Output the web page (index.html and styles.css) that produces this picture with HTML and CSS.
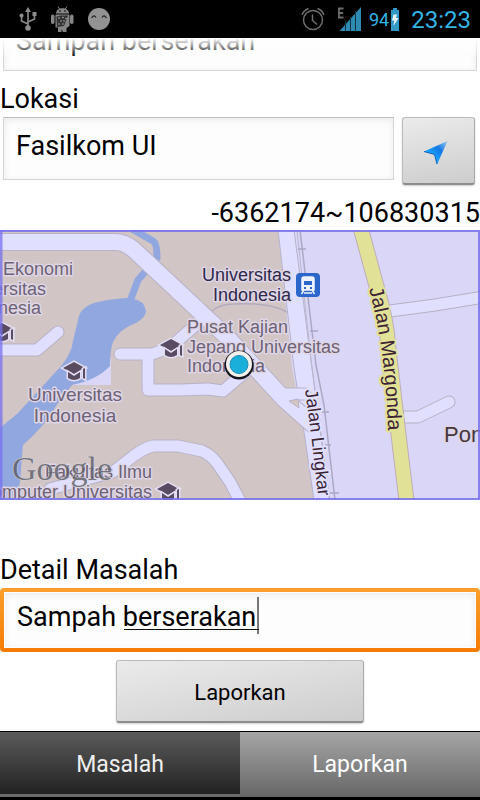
FILE: index.html
```html
<!DOCTYPE html>
<html lang="id">
<head>
<meta charset="utf-8">
<meta name="viewport" content="width=device-width, initial-scale=1">
<title>Laporkan Masalah</title>
<link rel="stylesheet" href="styles.css">
</head>
<body>
<header class="status">
  <div class="status-group notices">
    <svg class="usb" width="18" height="24" viewBox="0 0 18 24" aria-hidden="true">
      <path d="M9 4V20M9 17L2.500 14V9M9 15L15.500 12V7" fill="none" stroke="#8c8c8c" stroke-width="1.600"/>
      <path d="M9 0l3 5H6z" fill="#8c8c8c"/><circle cx="9" cy="21" r="2.800" fill="#8c8c8c"/>
      <circle cx="2.500" cy="8.500" r="2" fill="#8c8c8c"/><path d="M13.500 5h4v4h-4z" fill="#8c8c8c"/>
    </svg>
    <svg class="droid" width="23" height="27" viewBox="0 0 23 27" aria-hidden="true">
      <g fill="#858585"><path d="M5 7.500C5.200 0.500 17.800 0.500 18 7.500z"/><rect x="0" y="8.500" width="3.500" height="9.500" rx="1.700"/><rect x="19" y="8.500" width="3.500" height="9.500" rx="1.700"/><path d="M4.500 8.500h14V20l-3 2v4H12l-1.500-3v3H7v-4.500H4.500z"/></g>
      <path d="M7 .5l2 3M16 .5l-2 3" stroke="#858585"/>
      <path d="M5.500 10.500L10 9.500H17L13 20L6 21z" fill="#333"/>
      <g fill="#aaa"><circle cx="8" cy="12" r=".8"/><circle cx="12" cy="11.500" r=".8"/><circle cx="10" cy="15" r=".8"/><circle cx="13" cy="15" r=".8"/><circle cx="8" cy="18" r=".8"/><circle cx="12" cy="18" r=".8"/><circle cx="15" cy="12.500" r=".8"/></g>
      <g fill="#000"><circle cx="9" cy="5" r=".8"/><circle cx="14" cy="5" r=".8"/></g>
    </svg>
    <svg width="22" height="22" viewBox="0 0 22 22" aria-hidden="true">
      <circle cx="11" cy="11" r="11" fill="#929292"/>
      <path d="M3.500 10q2.500-4 4.500-.5M14 9.500q2-3.500 4.500.5" fill="none" stroke="#222" stroke-width="1.200"/>
    </svg>
  </div>
  <div class="status-group">
    <svg width="24" height="24" viewBox="0 0 24 24" aria-hidden="true">
      <g fill="none" stroke="#6e6e6e" stroke-width="1.500"><circle cx="12" cy="13" r="9.500"/><path d="M11.500 7.500V13.500L16 17.500M1 8Q3 3 7.500 1.500M16.500 1.500Q21 3 23 8"/></g>
    </svg>
    <svg class="signal" width="24" height="24" viewBox="0 0 24 24" aria-hidden="true">
      <path d="M1 1.500H6.500M2 1V11M1 10.500H6.500M1 6H6" fill="none" stroke="#6e6e6e" stroke-width="1.800"/>
      <path d="M2.500 24L24 0V24z" fill="#2d8bb2"/>
      <path d="M8.500 14V24M13.500 10V24M18.500 4V24" stroke="#0c3444"/>
    </svg>
    <span class="percent">94</span>
    <svg class="battery" width="8" height="23" viewBox="0 0 8 23" aria-hidden="true">
      <path d="M2 0h4v2h2v21H0V2h2z" fill="#3199c4"/><path d="M2.500 6.500H6L5 10h2.500L2.500 18l.7-5.500H1z" fill="#e8f5fa"/>
    </svg>
    <time class="clock">23:23</time>
  </div>
</header>

<main class="screen">
  <form class="report">
    <input class="field title" type="text" value="Sampah berserakan" aria-label="Masalah">
    <label class="caption" for="lokasi">Lokasi</label>
    <div class="location">
      <input class="field" id="lokasi" type="text" value="Fasilkom UI">
      <button class="button locate" type="button" aria-label="Lokasi saya">
        <svg width="24" height="24" viewBox="0 0 24 24" aria-hidden="true">
          <defs><linearGradient id="arrow" x1="1" y1="0" x2="0" y2="1"><stop offset="0" stop-color="#9ccdf2"/><stop offset=".35" stop-color="#1478e6"/><stop offset=".65" stop-color="#18a5ff"/><stop offset="1" stop-color="#0863cf"/></linearGradient></defs>
          <path d="M23.500 0L13 23.500L10.500 13.500L0 10.500z" fill="url(#arrow)"/><path d="M0 10.500L10.500 13.500L13 23" fill="none" stroke="#1560bd"/>
        </svg>
      </button>
    </div>
    <output class="coords" for="lokasi">-6362174~106830315</output>

    <svg class="map" viewBox="0 230 480 270" preserveAspectRatio="xMidYMid slice" role="img" aria-label="Peta">
      <defs>
        <path id="margonda" d="M369 289Q386 350 388 432L389 460"/>
        <path id="lingkar" d="M305 390Q311 430 315 470L321 520"/>
        <g id="cap"><path d="M0 7L11 1L22 7L11 13z"/><path d="M5 11V17Q11 21 17 17V11L11 15z"/><path d="M20 8V17L22 18V7z"/></g>
      </defs>
      <rect y="230" width="480" height="270" fill="#d1c5c5"/>
      <path d="M278 230H480V500H314L303 425L292 368z" fill="#dad6f7"/>
      <path d="M111 358V385H72z" fill="#dad6f7"/>
      <path d="M133 299Q144 300 146 311Q146 317 136 323Q119 329 113 342Q110 350 110 366Q97 380 72 385L58 403Q46 425 23 445L20 482L15 500H0V428L18 413L62 365Q72 352 73 341L79 316Q83 304 103 301Q113 299 127 298z" fill="#91a7e0"/>
      <path d="M132 229L153 241Q157 243 157 258L138 280L130 301" fill="none" stroke="#91a7e0" stroke-width="7"/>
      <path d="M212 311Q220 304 234 304Q270 302 287 312" fill="none" stroke="#b2abc0" stroke-width="1.500"/>
      <path d="M278 230H294L312 368L330 500H314L303 425L294 368z" fill="#e0dfff" stroke="#b6b2ca"/>
      <g fill="none" stroke="#b8b2c6" stroke-linecap="round" stroke-linejoin="round">
        <path d="M-10 242H115Q124 242 133 249L227 337L284 399L312 424" stroke-width="18"/>
        <path d="M-10 350H37L58 332M120 354H152Q165 350 175 343L198 323M148 355V390H180L208 389L223 391L250 368M284 394H305" stroke-width="13"/>
        <path d="M50 489L113 472L127 461Q143 448 153 446H178L202 451Q211 455 217 463L230 482L242 505" stroke-width="13"/>
      </g>
      <g fill="none" stroke="#e0dfff" stroke-linecap="round" stroke-linejoin="round">
        <path d="M-10 242H115Q124 242 133 249L227 337L284 399L312 424" stroke-width="16"/>
        <path d="M-10 350H37L58 332M120 354H152Q165 350 175 343L198 323M148 355V390H180L208 389L223 391L250 368M284 394H305" stroke-width="11"/>
        <path d="M50 489L113 472L127 461Q143 448 153 446H178L202 451Q211 455 217 463L230 482L242 505" stroke-width="11"/>
      </g>
      <path d="M289 401L298 399L299 408z" fill="#d1c5c5" stroke="#b8b2c6"/>
      <path d="M297 230L311 360L329 500" fill="none" stroke="#b9b6cc"/>
      <path d="M300 230L316 365L324 405L335 500M298 249H306M310 331H318M322 412H329M325 445H331M330 493H339" fill="none" stroke="#aba8c4" stroke-width="1.500"/>
      <g fill="none" stroke-linecap="round" stroke-linejoin="round">
        <path d="M390 311L435 305L490 296" stroke="#b5b1c2" stroke-width="13"/><path d="M400 417H418L449 402" stroke="#b5b1c2" stroke-width="13"/>
        <path d="M390 311L435 305L490 296M400 417H418L449 402" stroke="#e0dfff" stroke-width="11"/>
        <path d="M359 222L377 288Q387 323 388 345L397 422L407 505" stroke="#bdaeba" stroke-width="16"/>
        <path d="M359 222L377 288Q387 323 388 345L397 422L407 505" stroke="#e2e198" stroke-width="14"/>
      </g>
      <g class="road-name">
        <text class="yellow"><textPath href="#margonda">Jalan Margonda</textPath></text>
        <text class="lingkar"><textPath href="#lingkar">Jalan Lingkar</textPath></text>
      </g>
      <g class="place">
        <text x="3" y="275">Ekonomi</text><text x="46" y="295" text-anchor="end">ersitas</text><text x="41" y="314" text-anchor="end">nesia</text>
        <text x="187" y="333">Pusat Kajian</text><text x="187" y="353">Jepang Universitas</text><text x="187" y="372">Indonesia</text>
        <text x="152" y="478" text-anchor="end">Fakultas Ilmu</text><text x="152" y="498" text-anchor="end">omputer Universitas</text>
        <text class="large" x="75" y="401" text-anchor="middle">Universitas</text><text class="large" x="75" y="422" text-anchor="middle">Indonesia</text>
        <g class="station"><text x="291" y="281" text-anchor="end">Universitas</text><text x="291" y="301" text-anchor="end">Indonesia</text></g>
        <text class="pondok" x="444" y="442">Pon</text>
      </g>
      <g fill="#584b62" stroke="#e3def3" stroke-width="3" paint-order="stroke">
        <use href="#cap" x="-9" y="322"/><use href="#cap" x="63" y="361"/><use href="#cap" x="160" y="338"/><use href="#cap" x="157" y="482"/>
      </g>
      <rect x="296" y="273" width="24" height="24" rx="4" fill="#2b66cb"/>
      <path d="M304 277h8q2 0 2 2v11h-12v-11q0-2 2-2zM304 290l-2.500 4M312 290l2.500 4M304 293h8" fill="#eef2ff" stroke="#eef2ff" stroke-width="1.500"/>
      <path d="M304 281h8v4h-8zM304 287h2v2h-2zM310 287h2v2h-2z" fill="#2b66cb"/>
      <text class="google" x="12" y="480">Google</text>
      <circle cx="239" cy="365" r="14.500" fill="#16151b"/><circle cx="239" cy="364" r="13" fill="#f2f1ed"/><circle cx="239" cy="364.500" r="9" fill="#1aaedb" stroke="#1c8eb2"/>
      <path d="M0 231H480M479 230V500M480 499H0" fill="none" stroke="#7770ef" stroke-width="2" opacity=".85"/><path d="M1 230V500" stroke="#7770ef" stroke-width="3" opacity=".75"/>
    </svg>

    <label class="caption detail-caption" for="detail">Detail Masalah</label>
    <div class="focus-ring">
      <input class="field detail" id="detail" type="text" value="Sampah berserakan">
      <span class="composing"></span>
    </div>
    <button class="button submit" type="button">Laporkan</button>
  </form>
</main>

<nav class="tabs">
  <a class="tab active" href="#masalah">Masalah</a>
  <a class="tab" href="#laporkan">Laporkan</a>
</nav>
</body>
</html>
```

FILE: styles.css
```css
* { box-sizing: border-box; }

body {
  margin: 0;
  min-height: 100vh;
  display: flex;
  flex-direction: column;
  background: #fff;
  color: #000;
  font-family: Roboto, sans-serif;
  font-size: 27px;
  line-height: 32px;
}

svg { display: block; flex: none; }

.status {
  height: 38px;
  padding: 0 9px 0 19px;
  display: flex;
  align-items: center;
  justify-content: space-between;
  background: #000;
  color: #33b5e5;
}
.status-group { display: flex; align-items: center; }
.notices { gap: 14px; }
.signal { margin-left: 12px; }
.percent { margin: 2px 2px 0 8px; font-size: 18px; }
.clock { margin: 2px 0 0 12px; font-size: 24px; }

.screen { flex: 1; position: relative; overflow: hidden; }
.screen::before {
  content: "";
  position: absolute;
  z-index: 1;
  inset: 0 0 auto;
  height: 20px;
  background: linear-gradient(#fff, #fff0);
}
.report { display: flex; flex-direction: column; margin-top: -26px; }

.field {
  width: 100%;
  min-width: 0;
  height: 63px;
  margin: 0;
  padding: 0 12px 5px;
  border: 1px solid #d6d6d6;
  border-top-color: #c0c0c0;
  border-radius: 0;
  outline: 0;
  background: #fdfdfd;
  box-shadow: inset 0 2px 7px #00000014;
  color: #000;
  font: inherit;
}
.title { width: auto; height: 59px; margin: 0 3px; padding-bottom: 2px; }
.caption { margin-top: 12px; }

.location {
  display: flex;
  align-items: flex-start;
  gap: 8px;
  margin: 2px 5px 0 3px;
}
.button {
  border: 1px solid #bbb;
  border-right-color: #aaa;
  border-bottom: 2px solid #8c8c8c;
  border-radius: 3px;
  background: linear-gradient(170deg, #ebebeb, #cdcdcd);
  box-shadow: 0 1px 2px #0003;
  color: #000;
  font: 22px/28px Roboto, sans-serif;
}
.locate {
  flex: none;
  display: grid;
  place-items: center;
  width: 73px;
  height: 68px;
  padding: 5px 6px 0 0;
}
.coords { margin-top: 12px; text-align: right; }

.map { width: 100%; height: 270px; margin-top: 1px; font-family: "Liberation Sans", sans-serif; }
.place { fill: #6d6275; stroke: #dfd6e5; stroke-width: 3px; stroke-linejoin: round; font-size: 18px; }
.place text, .road-name text { paint-order: stroke; }
.large { font-size: 19px; }
.station { fill: #2e294b; }
.pondok { fill: #453642; font-size: 22px; }
.road-name { stroke-width: 4px; stroke-linejoin: round; font-size: 20px; fill: #3c2435; }
.yellow { stroke: #e2e198; }
.lingkar { stroke: #e0dfff; font-size: 18px; }
.google {
  fill: #55555f;
  fill-opacity: .75;
  stroke: #d9d5dd;
  stroke-width: 1px;
  paint-order: stroke;
  font-family: "Liberation Serif", serif;
  font-size: 34px;
}

.detail-caption { margin-top: 54px; }
.focus-ring {
  position: relative;
  margin-top: 2px;
  padding: 4px;
  border-radius: 4px;
  background: linear-gradient(#fb9f2c, #f47b05);
}
.detail { display: block; height: 56px; padding-bottom: 6px; border-color: #fdfdfd; }
.composing {
  position: absolute;
  left: 124px;
  top: 9px;
  width: 135px;
  height: 37px;
  pointer-events: none;
  background:
    linear-gradient(#111, #111) 0 32px / 100% 1px no-repeat,
    linear-gradient(#777, #777) 100% 0 / 2px 100% no-repeat;
}
.submit { align-self: center; width: 248px; height: 63px; margin: 8px 0; padding-top: 4px; }

.tabs {
  display: grid;
  grid-template-columns: 1fr 1fr;
  border-top: 1px solid #000;
  border-bottom: 3px solid #000;
}
.tab {
  height: 65px;
  display: grid;
  place-items: center;
  background: linear-gradient(#a6a6a6, #666);
  color: #fff;
  font-size: 23px;
  text-decoration: none;
}
.active {
  padding-top: 3px;
  border-bottom: 3px solid #6c6c6c;
  background: linear-gradient(#5b5b5b, #222);
  color: #eee;
}
```
